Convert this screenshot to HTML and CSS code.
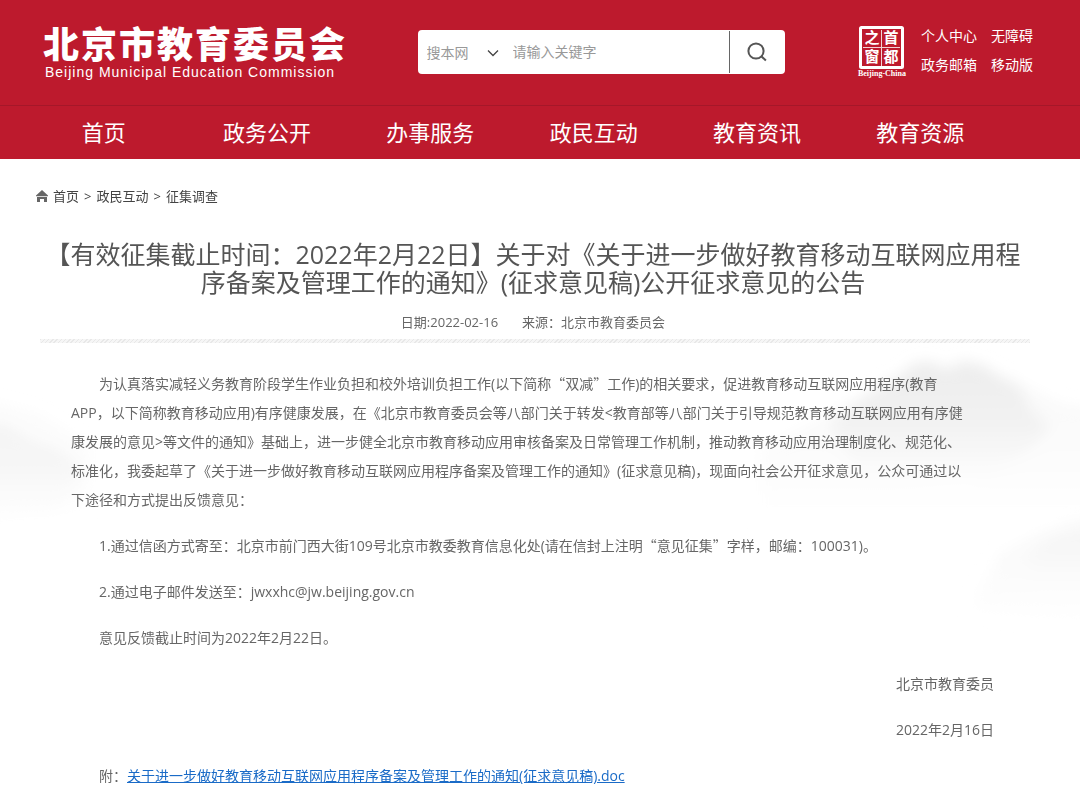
FILE: index.html
```html
<!DOCTYPE html>
<html lang="zh-CN">
<head>
    <meta charset="UTF-8">
    <meta name="viewport" content="width=device-width, initial-scale=1.0">
    <title>北京市教育委员会</title>
    <link rel="stylesheet" href="styles.css">
</head>
<body>
    <header class="header">
        <div class="header-top">
            <a class="logo" href="#">
                <span class="logo-cn">北京市教育委员会</span>
                <span class="logo-en">Beijing Municipal Education Commission</span>
            </a>

            <form class="search">
                <div class="search-scope">
                    <select class="scope-select" aria-label="搜索范围">
                        <option>搜本网</option>
                    </select>
                    <svg class="scope-arrow" width="12" height="8" viewBox="0 0 12 8"><path d="M1 1.5l5 5 5-5" fill="none" stroke="#444" stroke-width="1.3"/></svg>
                </div>
                <input class="search-input" type="text" placeholder="请输入关键字" aria-label="关键字">
                <button class="search-btn" type="submit" aria-label="搜索">
                    <svg width="22" height="22" viewBox="0 0 22 22" fill="none" stroke="#555" stroke-width="2"><circle cx="10" cy="10" r="7.6"/><path d="M15.3 15.3l4.6 4.3"/></svg>
                </button>
            </form>

            <div class="tools">
                <a class="seal" href="#">
                    <svg width="50" height="52" viewBox="0 0 50 52">
                        <rect x="3.5" y="1.5" width="42" height="40" rx="1" fill="none" stroke="#fff" stroke-width="3"/>
                        <path d="M24.5 4v36M6 21.5h37" stroke="#fff" stroke-width="1" opacity=".8"/>
                        <g class="seal-text">
                            <text x="15" y="17">之</text>
                            <text x="34" y="17">首</text>
                            <text x="15" y="36">窗</text>
                            <text x="34" y="36">都</text>
                        </g>
                        <text class="seal-en" x="25" y="50">Beijing-China</text>
                    </svg>
                </a>
                <div class="tool-links">
                    <a href="#">个人中心</a>
                    <a href="#">无障碍</a>
                    <a href="#">政务邮箱</a>
                    <a href="#">移动版</a>
                </div>
            </div>
        </div>

        <nav class="nav">
            <a href="#">首页</a>
            <a href="#">政务公开</a>
            <a href="#">办事服务</a>
            <a href="#">政民互动</a>
            <a href="#">教育资讯</a>
            <a href="#">教育资源</a>
        </nav>
    </header>

    <main class="main">
        <!-- ink mountains behind the article -->
        <svg class="hills" viewBox="0 0 1080 633" preserveAspectRatio="none" aria-hidden="true">
            <defs>
                <linearGradient id="mist" x1="0" y1="0" x2="0" y2="1">
                    <stop offset="0" stop-color="#ededed"/>
                    <stop offset="0.5" stop-color="#f2f2f2"/>
                    <stop offset="1" stop-color="#fff"/>
                </linearGradient>
                <linearGradient id="haze" x1="0" y1="0" x2="0" y2="1">
                    <stop offset="0" stop-color="#f8f8f8"/>
                    <stop offset="1" stop-color="#fff"/>
                </linearGradient>
                <filter id="soft"><feGaussianBlur stdDeviation="7"/></filter>
            </defs>
            <g filter="url(#soft)">
                <path fill="url(#haze)" d="M760 290L840 250 900 215 1000 215 1060 245 1100 250V360H760z"/>
                <path fill="url(#mist)" d="M830 265L860 240 895 220 915 204 932 203 945 210 965 202 985 207 1000 218 1020 228 1030 250 1050 268 1030 290 970 330 860 320z"/>
                <path fill="url(#haze)" d="M970 450L1000 395 1040 375 1070 365 1100 360V470z"/>
                <path fill="url(#mist)" d="M1025 400L1050 380 1100 370V430H1035z" opacity=".3"/>
                <path fill="url(#mist)" d="M-20 262L10 268 30 280 60 290 85 310 60 350 -20 360z"/>
                <path fill="url(#haze)" d="M-20 240L40 255 90 285 90 350 -20 370z" opacity=".5"/>
            </g>
        </svg>

        <div class="crumbs">
            <svg width="12" height="12" viewBox="0 0 12 12"><path d="M6 0l6 5.5v.8H0v-.8zM1 7h10v5H8V9H4v3H1z" fill="#666"/></svg>
            <a href="#">首页</a>
            <span>&gt;</span>
            <a href="#">政民互动</a>
            <span>&gt;</span>
            <a href="#">征集调查</a>
        </div>

        <article class="article">
            <div class="article-head">
                <h1>【有效征集截止时间：2022年2月22日】关于对《关于进一步做好教育移动互联网应用程<br>序备案及管理工作的通知》(征求意见稿)公开征求意见的公告</h1>
                <div class="meta">
                    <span>日期:2022-02-16</span>
                    <span>来源：北京市教育委员会</span>
                </div>
            </div>
            <div class="divider"></div>

            <div class="content">
                <p>为认真落实减轻义务教育阶段学生作业负担和校外培训负担工作(以下简称<span class="quoted">“双减”</span>工作)的相关要求，促进教育移动互联网应用程序(教育<br>APP，以下简称教育移动应用)有序健康发展，在《北京市教育委员会等八部门关于转发&lt;教育部等八部门关于引导规范教育移动互联网应用有序健<br>康发展的意见&gt;等文件的通知》基础上，进一步健全北京市教育移动应用审核备案及日常管理工作机制，推动教育移动应用治理制度化、规范化、<br>标准化，我委起草了《关于进一步做好教育移动互联网应用程序备案及管理工作的通知》(征求意见稿)，现面向社会公开征求意见，公众可通过以<br>下途径和方式提出反馈意见：</p>
                <p>1.通过信函方式寄至：北京市前门西大街109号北京市教委教育信息化处(请在信封上注明<span class="quoted">“意见征集”</span>字样，邮编：100031)。</p>
                <p>2.通过电子邮件发送至：jwxxhc@jw.beijing.gov.cn</p>
                <p>意见反馈截止时间为2022年2月22日。</p>
                <p class="sign">北京市教育委员</p>
                <p class="sign">2022年2月16日</p>
                <p>附：<a class="file" href="#">关于进一步做好教育移动互联网应用程序备案及管理工作的通知(征求意见稿).doc</a></p>
            </div>
        </article>
    </main>
</body>
</html>
```

FILE: styles.css
```css
* {
    box-sizing: border-box;
}

body {
    margin: 0;
    font-family: "Open Sans", "Noto Sans CJK SC", sans-serif;
    font-size: 14px;
    color: #666;
    background-color: #fff;
}

a {
    color: inherit;
    text-decoration: none;
}

svg {
    display: block;
}

/* header */
.header {
    background-color: #bd1a2d;
    color: #fff;
}

.header-top {
    display: flex;
    align-items: flex-start;
    justify-content: space-between;
    height: 105px;
    padding: 24px 47px 0 43px;
}

.logo {
    display: flex;
    flex-direction: column;
    gap: 4px;
    width: 302px;
}

.logo-cn {
    font-family: "Noto Sans CJK SC", sans-serif;
    font-size: 36px;
    font-weight: 900;
    line-height: 36px;
    letter-spacing: 2px;
    white-space: nowrap;
}

.logo-en {
    padding-left: 2px;
    font-family: "Liberation Sans", sans-serif;
    font-size: 14px;
    line-height: 16px;
    letter-spacing: 1px;
    white-space: nowrap;
}

.search {
    display: flex;
    width: 367px;
    height: 44px;
    margin-top: 6px;
    background-color: #fff;
    border-radius: 4px;
}

.search-scope {
    position: relative;
    width: 85px;
}

.scope-select {
    width: 100%;
    height: 100%;
    padding: 0 0 0 9px;
    border: 0;
    background: none;
    appearance: none;
    font: inherit;
    color: #999;
}

.scope-arrow {
    position: absolute;
    top: 19px;
    right: 4px;
    pointer-events: none;
}

.search-input {
    flex: 1;
    min-width: 0;
    padding: 0 10px 2px;
    border: 0;
    background: none;
    font: inherit;
    color: #333;
}

.search-input::placeholder {
    color: #999;
}

.search-btn {
    display: flex;
    align-items: center;
    justify-content: center;
    width: 56px;
    margin: 1px 0;
    padding: 0;
    border: 0;
    border-left: 1px solid #666;
    background: none;
}

.tools {
    display: flex;
    gap: 14px;
}

.seal {
    margin-top: 2px;
}

.seal-text {
    font-size: 15px;
    font-weight: 700;
    fill: #fff;
    text-anchor: middle;
}

.seal-en {
    font-family: "Liberation Serif", serif;
    font-size: 8px;
    font-weight: 700;
    fill: #fff;
    text-anchor: middle;
}

.tool-links {
    display: grid;
    grid-template-columns: auto auto;
    column-gap: 14px;
    line-height: 29px;
    margin-top: -3px;
}

.nav {
    display: flex;
    padding: 0 78px 0 22px;
    border-top: 1px solid #a51729;
}

.nav a {
    flex: 1;
    font-size: 22px;
    line-height: 53px;
    text-align: center;
}

/* page */
.main {
    position: relative;
    padding: 27px 50px 0 36px;
}

.hills {
    position: absolute;
    top: 0;
    left: 0;
    z-index: -1;
    width: 100%;
    height: 633px;
}

.crumbs {
    display: flex;
    align-items: center;
    gap: 5px;
    font-size: 13px;
    line-height: 20px;
    color: #444;
}

.article {
    padding-left: 4px;
}

.article-head {
    padding-right: 4px;
}

h1 {
    margin: 34px 0 0;
    font-size: 25px;
    font-weight: 400;
    line-height: 28px;
    text-align: center;
    white-space: nowrap;
    color: #555;
}

.meta {
    display: flex;
    justify-content: center;
    gap: 24px;
    margin-top: 16px;
    font-size: 13px;
    line-height: 20px;
}

.divider {
    height: 4px;
    margin-top: 7px;
    background: repeating-linear-gradient(135deg, #e8e8e8 0 1px, #f6f6f6 1px 3px);
}

.content {
    padding: 26px 36px 0 31px;
    line-height: 29px;
}

.content p {
    margin: 0 0 17px;
    text-indent: 2em;
    white-space: nowrap;
}

.content .sign {
    text-align: right;
}

.quoted {
    font-family: "Noto Sans CJK SC", sans-serif;
}

.file {
    color: #1a6bc7;
    text-decoration: underline;
}
```
